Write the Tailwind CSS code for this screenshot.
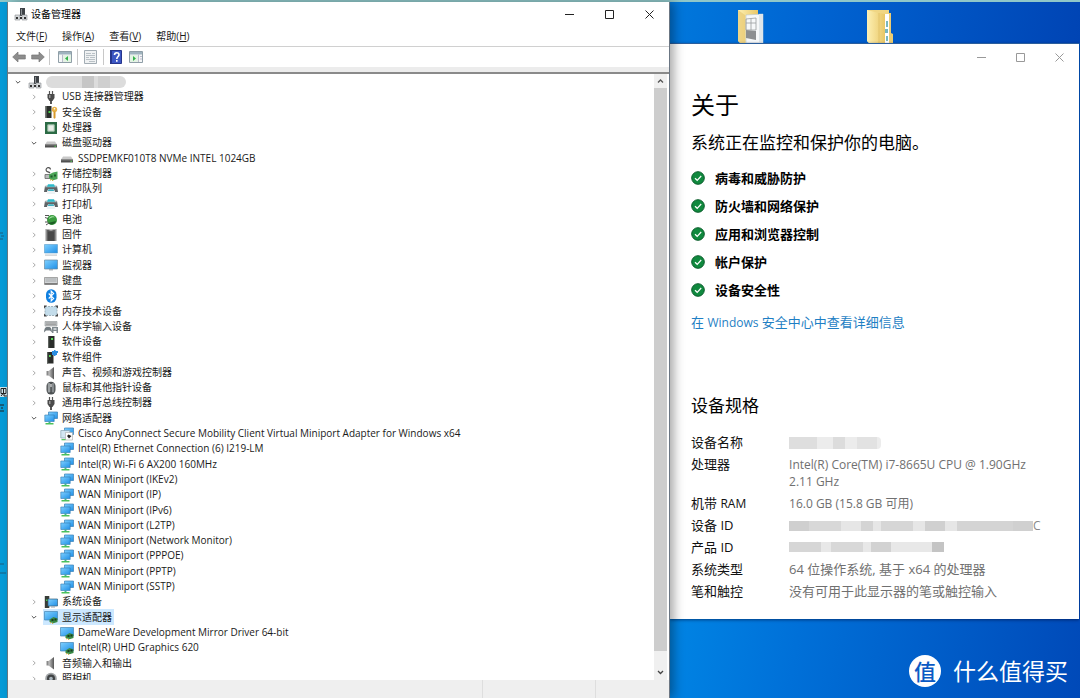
<!DOCTYPE html>
<html lang="zh-CN">
<head>
<meta charset="utf-8">
<meta name="viewport" content="width=device-width, initial-scale=1">
<title>设备管理器</title>
<script src="https://cdn.jsdelivr.net/npm/@tailwindcss/browser@4"></script>
</head>
<body class="h-screen overflow-hidden bg-[#0a5fd0] font-['Open_Sans','Noto_Sans_CJK_SC',sans-serif] text-black">

<svg class="absolute size-0" aria-hidden="true">
  <defs>
    <linearGradient id="scr" x1="0" y1="0" x2="1" y2="1"><stop offset="0" stop-color="#7fd0ff"/><stop offset="1" stop-color="#1f8fe6"/></linearGradient>
    <linearGradient id="met" x1="0" y1="0" x2="1" y2="0"><stop offset="0" stop-color="#c9c9c9"/><stop offset="1" stop-color="#555"/></linearGradient>
    <linearGradient id="fold" x1="0" y1="0" x2="1" y2="0"><stop offset="0" stop-color="#fdf0b4"/><stop offset="1" stop-color="#e9c766"/></linearGradient>
  </defs>
  <symbol id="i-root" viewBox="0 0 14 14"><path fill="#3f4347" d="M6 1h5v8H6z"/><path fill="#8b9094" d="M7 2h1v6H7z"/><path fill="#d5d8da" stroke="#8a8d90" stroke-width=".6" d="M1 8h5v5H1zM8 8h5v5H8z"/><path fill="#333" d="M2 10h2v2H2zM10 10h2v2h-2zM6 10h2v2H6z"/></symbol>
  <symbol id="i-usb" viewBox="0 0 14 14"><path stroke="#555" stroke-width="1.200" d="M5.500 1v3M8.500 1v3"/><path fill="#4b4b4b" d="M3.500 4h7v4l-2 3h-3l-2-3z"/><path fill="#999" d="M5 5h1.500v3H5z"/><path stroke="#444" stroke-width="1.800" d="M7 10v4"/></symbol>
  <symbol id="i-sec" viewBox="0 0 14 14"><path fill="#2b2e2b" d="M1.500 1h6v12h-6z"/><path fill="#5a5f5a" d="M1.500 1h1.500v12H1.500z"/><path fill="#49d04a" d="M4.500 6h2v2h-2z"/><circle cx="10.500" cy="4.500" r="2.700" fill="#e9b34a"/><circle cx="10.500" cy="3.700" r=".8" fill="#fff"/><path fill="#d89a2c" d="M9.500 6.500h2V13l-1 .8-1-.8z"/></symbol>
  <symbol id="i-cpu" viewBox="0 0 14 14"><path fill="#2c6b45" d="M1 1h12v12H1z"/><path fill="#e9eee9" stroke="#9fc0a8" d="M3.800 3.800h6.400v6.400H3.800z"/></symbol>
  <symbol id="i-disk" viewBox="0 0 14 14"><path fill="#c9c9c9" d="M3 5.500h8L13 8.500H1z"/><path fill="#505050" d="M1 8.500h12v3H1z"/><path fill="#7a7a7a" d="M1 8.500h12v1H1z"/><path fill="#53d053" d="M10.500 9.800h1.500v1h-1.500z"/></symbol>
  <symbol id="i-stor" viewBox="0 0 14 14"><path fill="none" stroke="#555" stroke-width="1.200" d="M6.500 2.500a2.200 2.200 0 1 0-4 1.500c.5 1 2.500.8 3.500 2"/><path fill="#b9bcbc" stroke="#666" stroke-width=".8" d="M1 7.500h5v4H1z"/><path fill="#4ca558" d="M5 7.500l4-2 4.500-1V12l-5 1.500L5 11z"/><path fill="#1f5a2b" d="M6.500 8.500h2v2h-2zM10 7.500h2v2h-2z"/><path fill="#d8b44a" d="M6 12h1v1.500H6zM8 12.500h1V14H8z"/></symbol>
  <symbol id="i-prn" viewBox="0 0 14 14"><path fill="#5e6366" d="M1 4h12l1 6h-3l-1-2.500H4L3 10H0z"/><path fill="#b5babd" d="M1.500 3.500h11l.4 1.800H1.100z"/><path fill="#2bbaca" d="M4 2.300h6l1 2.400H3z"/><path fill="#eef3f5" d="M4.200 7.500h5.600L11.500 12h-9z"/><path fill="#3fafc0" d="M4.500 7.200h5l.6 1.800H3.900z"/></symbol>
  <symbol id="i-bat" viewBox="0 0 14 14"><circle cx="8" cy="7" r="5" fill="#3a9b3f"/><path fill="#9fdf9f" d="M5 5c2-2.500 5-2 6-.5-2-.5-4 .2-6 1.500z"/><path fill="#1d5f25" d="M4 10l8-2c-.5 3-5 5-8 2z"/><path stroke="#555" fill="none" d="M1 2.500h4M1 4.500l3 1M2 12l3-2M1 9h3"/></symbol>
  <symbol id="i-fw" viewBox="0 0 14 14"><path fill="#606060" d="M2.500 1.500h9v11.500h-9z"/><path fill="#484848" d="M4 3.500h6V13H4z"/><path stroke="#444" stroke-dasharray="1 1" stroke-width="1.200" d="M2 1.500V13M12 1.500V13"/><path fill="#ccc" d="M5.500 1h3v1.500h-3z"/></symbol>
  <symbol id="i-pc" viewBox="0 0 14 14"><path fill="url(#scr)" stroke="#5a9ac8" stroke-width=".6" d="M.5 1.500h13v8.500H.5z"/><path fill="#c4c9cc" d="M1 11.500h12v1.200H1z"/></symbol>
  <symbol id="i-mon" viewBox="0 0 14 14"><path fill="url(#scr)" stroke="#6c8ba1" stroke-width=".7" d="M.5 2h13v9H.5z"/><path fill="#9aa3a8" d="M5 11.200h4v1.200H5z"/></symbol>
  <symbol id="i-kb" viewBox="0 0 14 14"><path fill="#d2d5d7" stroke="#888" stroke-width=".7" d="M.5 3.500h13v6H.5z"/><path stroke="#a5a9ab" d="M1.500 5h11M1.500 7h11"/><path fill="#555" d="M.3 9.500h13.400v1.200H.3z"/></symbol>
  <symbol id="i-bt" viewBox="0 0 14 14"><rect x="2" y=".3" width="10.500" height="13.400" rx="5.200" fill="#0f7fe0"/><path fill="none" stroke="#fff" stroke-width="1.100" d="M4.700 4.500l5 5L7.200 12V2l2.500 2.500-5 5"/></symbol>
  <symbol id="i-mem" viewBox="0 0 14 14"><path fill="#c3dcea" stroke="#8fa3af" stroke-width=".8" stroke-dasharray="2 1" d="M1 2.500h12v9H1z"/><path fill="#444" d="M0 1.500h3l-3 3zM14 1.500h-3l3 3zM14 12.500h-3l3-3zM0 12.500h3l-3-3z"/></symbol>
  <symbol id="i-hid" viewBox="0 0 14 14"><path fill="#c3c7c9" stroke="#8f9395" stroke-width=".6" d="M1 1.500h12V6H1z"/><path stroke="#999" d="M2 3h10M2 4.700h10"/><path fill="#727b80" d="M0 12.500c0-3 1-5.500 2.500-5.500h3C7 7 8 9.500 8 12.500l-2-2H2z"/><path fill="#808a8f" d="M8 7h6v6h-1.500v-2h-3v2H8z"/><path fill="#c9ced1" d="M9.500 8h3v2h-3z"/></symbol>
  <symbol id="i-dev" viewBox="0 0 14 14"><path fill="#2a2d2a" d="M4 1h6.500v12H4z"/><path fill="#606460" d="M4 1h1.200v12H4z"/><path fill="#58d858" d="M7 3h2v2H7z"/></symbol>
  <symbol id="i-comp" viewBox="0 0 14 14"><path fill="#2a2d2a" d="M3 2h6.500v11.500H3z"/><path fill="#606460" d="M3 2h1.200v11.500H3z"/><path fill="#58d858" d="M5 5h1.800v2H5z"/><path fill="#2a8de0" d="M8 1h2V0h1.500v1H14v2h-1v2h-1.500v1H10V5H8z"/></symbol>
  <symbol id="i-snd" viewBox="0 0 14 14"><path fill="#8a8a8a" d="M2.500 5h3v4.500h-3z"/><path fill="url(#met)" d="M4.500 5L10 1v12.500L4.500 9.500z"/></symbol>
  <symbol id="i-mouse" viewBox="0 0 14 14"><rect x="2.500" y=".8" width="9" height="12.600" rx="4.300" fill="#4c5052"/><rect x="3.800" y="2" width="2.500" height="9.500" rx="1.200" fill="#9ba0a2"/><rect x="7.800" y="2" width="2.400" height="9.500" rx="1.200" fill="#868b8e"/><path fill="#ddd" d="M6.400 3h1.200v3H6.400z"/></symbol>
  <symbol id="i-net" viewBox="0 0 14 14"><path fill="url(#scr)" stroke="#3a7fb5" stroke-width=".7" d="M4.500 1h9v6.500h-9z"/><path fill="url(#scr)" stroke="#2f78b0" stroke-width=".6" d="M.8 4h9.400v6.500H.8z"/><path fill="#3fae9a" d="M4.500 10.500h2V12h-2z"/><path fill="#4cc05a" d="M1.500 12h8v1.500h-8z"/></symbol>
  <symbol id="i-vnet" viewBox="0 0 14 14"><path fill="url(#scr)" stroke="#3a7fb5" stroke-width=".7" d="M4.500 1h9v6.500h-9z"/><path fill="#d3e6f2" stroke="#86a4b5" stroke-width=".7" d="M.8 3.500h9v7.500h-9z"/><path fill="#fff" stroke="#aaa" stroke-width=".6" d="M5.500 5.500h7v7.500h-7z"/><path fill="#222" d="M8.500 7.500L11.500 9l-2.500 2.500L7 9z"/><path fill="#58c563" d="M1.500 12h4v1.300h-4z"/></symbol>
  <symbol id="i-sys" viewBox="0 0 14 14"><path fill="#383c38" d="M.8 1h4.500v12H.8z"/><path fill="#49d04a" d="M2 4.500h1.500V6H2z"/><path fill="url(#scr)" stroke="#37617d" stroke-width=".7" d="M4 4h9.500v7H4z"/><path fill="#9aa3a8" d="M7 11.500h4v1H7z"/></symbol>
  <symbol id="i-gpu" viewBox="0 0 14 14"><path fill="url(#scr)" stroke="#4385b5" stroke-width=".7" d="M.5 1.500h13V10H.5z"/><path fill="#3a8a46" d="M5.500 9.500l4-2.500 4 1.500V12l-4 1.200-4-1.200z"/><path fill="#193d20" d="M7.500 9h2v2h-2zM10.500 8.500h2v2h-2z"/><path fill="#d8b44a" d="M6 12h1v1.300H6zM8 12.700h1V14H8z"/></symbol>
  <symbol id="i-cam" viewBox="0 0 14 14"><circle cx="7" cy="6.500" r="5.800" fill="#a0a4a6"/><circle cx="7" cy="6.500" r="4" fill="#404345"/><circle cx="7" cy="6.500" r="1.800" fill="#a8b4bc"/><path fill="#777" d="M4 12h6v1.500H4z"/></symbol>
  <symbol id="c-open" viewBox="0 0 8 8"><path fill="none" stroke="#555" d="M1.800 3L4 5.200 6.200 3"/></symbol>
  <symbol id="c-shut" viewBox="0 0 8 8"><path fill="none" stroke="#a8a8a8" d="M3 1.800L5.200 4 3 6.200"/></symbol>
</svg>

<div class="flex h-full border-t-2 border-[#8fc7c9]">
  <!-- desktop visible left of the window, with the edges of its icon captions -->
  <aside class="flex w-2 shrink-0 flex-col border-r border-[#6f7f8a] bg-[#069bd8]" aria-hidden="true">
    <svg class="mt-[228px] h-3 w-[7px]" viewBox="0 0 7 12"><path fill="none" stroke="#1b5f80" d="M0 3h3M1 6h3M0 9h3"/></svg>
    <svg class="mt-[140px] h-[34px] w-[7px]" viewBox="0 0 7 34"><path fill="#cfe6ee" d="M0 5h7v10H0z"/><path fill="none" stroke="#222" d="M1 6.500h5v5H1zM3.500 6v5L1 14M4 11v3h3M0 23h4M1 26h2M0 29h4"/></svg>
    <svg class="mt-[144px] h-4 w-[7px]" viewBox="0 0 7 16"><path stroke="#1b5f80" d="M0 4h4M0 13h6"/></svg>
  </aside>

  <!-- device manager -->
  <main class="relative z-10 flex w-[61.3%] shrink-0 flex-col border-r border-[#6b7683] bg-white shadow-[4px_0_10px_rgba(0,0,0,0.35)]">
    <header class="flex h-6 shrink-0 items-center pl-[6px]">
      <svg class="size-[14px]" aria-hidden="true"><use href="#i-root"/></svg>
      <h1 class="ml-[3px] flex-1 text-[10px]">设备管理器</h1>
      <div class="flex text-[#222]">
        <button class="flex h-6 w-10 items-center justify-center" aria-label="最小化"><svg class="size-[9px]" viewBox="0 0 9 9"><path stroke="currentColor" d="M0 4.500h9"/></svg></button>
        <button class="flex h-6 w-10 items-center justify-center" aria-label="最大化"><svg class="size-[9px]" viewBox="0 0 9 9"><path fill="none" stroke="currentColor" d="M.5.5h8v8h-8z"/></svg></button>
        <button class="flex h-6 w-10 items-center justify-center" aria-label="关闭"><svg class="size-[9px]" viewBox="0 0 9 9"><path stroke="currentColor" d="M.5.5l8 8M8.500.5l-8 8"/></svg></button>
      </div>
    </header>
    <nav class="flex h-[21px] shrink-0 items-center gap-[15px] border-b border-[#d0d0d0] pl-2 text-[10px] text-[#1a1a1a]">
      <button>文件(<u>F</u>)</button><button>操作(<u>A</u>)</button><button>查看(<u>V</u>)</button><button>帮助(<u>H</u>)</button>
    </nav>
    <div class="flex h-5 shrink-0 items-center pl-1" role="toolbar" aria-label="工具栏">
      <button aria-label="后退"><svg class="h-3 w-[14px]" viewBox="0 0 14 12"><path fill="#8d8d8d" stroke="#777" stroke-width=".7" d="M.7 6L6 1v3h7.300v4H6v3z"/></svg></button>
      <button class="ml-[5px]" aria-label="前进"><svg class="h-3 w-[14px]" viewBox="0 0 14 12"><path fill="#8d8d8d" stroke="#777" stroke-width=".7" d="M13.300 6L8 1v3H.7v4H8v3z"/></svg></button>
      <span class="ml-1 h-4 w-px bg-[#c8c8c8]"></span>
      <button class="ml-2" aria-label="显示控制台树"><svg class="h-3 w-[14px]" viewBox="0 0 14 12"><path fill="#f4f6f7" stroke="#8f9ea7" d="M.5.5h13v11H.5z"/><path fill="#9fb3be" d="M1 1h12v2.500H1z"/><path stroke="#bbc" d="M4.500 3.500V11"/><path fill="#e4f3e4" d="M5 4h8v7H5z"/><path fill="#34b24b" d="M10 5v5L7 7.500z"/></svg></button>
      <span class="ml-[5px] h-4 w-px bg-[#c8c8c8]"></span>
      <button class="ml-[6px]" aria-label="属性"><svg class="h-[14px] w-[13px]" viewBox="0 0 13 14"><path fill="#f0f2f3" stroke="#a3adb4" d="M.5.5h12v13H.5z"/><path stroke="#b9c1c6" d="M2 3.500h5M8 3.500h3M2 5.500h9M2 7.500h3M6 7.500h5M2 9.500h9M5 11.500h6"/></svg></button>
      <span class="ml-[6px] h-4 w-px bg-[#c8c8c8]"></span>
      <button class="ml-[6px]" aria-label="帮助"><svg class="h-[14px] w-3" viewBox="0 0 12 14"><path fill="#3c57c4" stroke="#26358c" d="M.5.5h11v13H.5z"/><path fill="#26358c" d="M0 0h2v14H0z"/><path fill="none" stroke="#fff" stroke-width="1.600" d="M4.500 5c0-3 4.500-3 4.500-.3C9 6.500 6.800 6.500 6.800 9M6.800 10v1.800"/></svg></button>
      <button class="ml-[7px]" aria-label="扫描"><svg class="h-3 w-[14px]" viewBox="0 0 14 12"><path fill="#f4f6f7" stroke="#8f9ea7" d="M.5.5h13v11H.5z"/><path fill="#9fb3be" d="M1 1h12v2.500H1z"/><path stroke="#bbc" d="M9.500 3.500V11M11 5.500h2M11 8h2"/><path fill="#e4f3e4" d="M1 4h8v7H1z"/><path fill="#34b24b" d="M4 5v5l3-2.500z"/></svg></button>
    </div>
    <div class="h-[5px] shrink-0 bg-[#ececec]"></div>
    <div class="flex min-h-0 flex-1 border-t-2 border-[#8a8a8a] pr-[2px]">
      <ul id="tree" role="tree" aria-label="设备" class="grid min-w-0 flex-1 auto-rows-[15px_15px_16px_15px_15px_16px_15px_15px_16px_15px] content-start overflow-hidden text-[10px] text-[#1a1a1a]"></ul>
      <div class="flex w-[13px] flex-col bg-[#f0f0f0]" aria-hidden="true">
        <svg class="h-[14px] w-[13px]" viewBox="0 0 13 14"><path fill="none" stroke="#555" stroke-width="1.300" d="M4 8.500L6.500 6 9 8.500"/></svg>
        <div class="flex-1 bg-[#cdcdcd]"></div>
        <svg class="mt-[14px] h-[15px] w-[13px]" viewBox="0 0 13 15"><path fill="none" stroke="#444" stroke-width="1.300" d="M4 6l2.500 2.500L9 6"/></svg>
      </div>
    </div>
    <footer class="flex h-[18px] shrink-0 bg-[#efefef]">
      <div class="flex-1 border-r border-[#dedede]"></div><div class="w-[113px] border-r border-[#dedede]"></div><div class="w-[73px]"></div>
    </footer>
  </main>

  <!-- right part of the desktop -->
  <div class="flex min-w-0 flex-1 flex-col bg-[linear-gradient(100deg,#0095ee_0%,#0070d8_45%,#0049b8_100%)]">
    <div class="flex h-[41px] shrink-0 items-end bg-[linear-gradient(100deg,#0078dc_0%,#0064d2_35%,#0044b4_100%)] pl-[67px]">
      <svg class="h-[34px] w-7" viewBox="0 0 28 34" role="img" aria-label="文件夹"><path fill="url(#fold)" d="M1 1h20v33H3l-2-2z"/><path fill="#f6f8f9" stroke="#b8c4cc" stroke-width=".6" d="M9 6l17-1v29H9z"/><path fill="#dfe6ea" d="M22 5h4v29h-4z"/><path fill="none" stroke="#9a9da0" stroke-width=".8" d="M9 10l10-1v12H9zM14 9.500V21M9 14h10"/><path fill="#8d8f91" d="M9 21l10 1v9l-10-2z"/><path fill="#e6c56c" d="M1 1l7 5v28H3l-2-2z" opacity=".6"/></svg>
      <svg class="ml-[101px] h-[34px] w-7" viewBox="0 0 28 34" role="img" aria-label="文件夹"><path fill="#f0d684" d="M1 1h22v33H3l-2-2z"/><path fill="#fff" d="M17 5h8v29h-8z"/><path fill="#79b7bd" d="M20 12h2v6h-2zM19 20h3v4h-3zM20 27h2v5h-2z"/><path fill="url(#fold)" d="M1 1l12 3 6 1v29H3l-2-2z"/><path fill="#eccc73" d="M23 4h2v20l2 1v9h-4z"/><path stroke="#d9b758" d="M13 4v30" opacity=".5"/></svg>
    </div>
    <section class="mr-px shrink-0 border-t border-[#2b5e9c] bg-white pb-[14px] pl-[21px] shadow-[0_1px_3px_rgba(0,0,40,0.5)]">
      <div class="flex h-[27px] items-center justify-end text-[#999]">
        <button class="flex h-full w-[39px] items-center justify-center" aria-label="最小化"><svg class="size-[9px]" viewBox="0 0 9 9"><path stroke="currentColor" d="M0 4.500h9"/></svg></button>
        <button class="flex h-full w-[39px] items-center justify-center" aria-label="最大化"><svg class="size-[9px]" viewBox="0 0 9 9"><path fill="none" stroke="currentColor" d="M.5.5h8v8h-8z"/></svg></button>
        <button class="flex h-full w-[39px] items-center justify-center" aria-label="关闭"><svg class="size-[9px]" viewBox="0 0 9 9"><path stroke="currentColor" d="M.5.5l8 8M8.500.5l-8 8"/></svg></button>
      </div>
      <h2 class="mt-[18px] text-[24px] leading-8">关于</h2>
      <p class="mt-[10px] text-[17px] leading-6">系统正在监控和保护你的电脑。</p>
      <ul class="mt-[9px] text-[13px] leading-7 font-bold" id="checks"></ul>
      <a href="#" class="mt-2 block text-[13px] leading-5 text-[#1f7fc4]">在 <span class="text-[12px]">Windows</span> 安全中心中查看详细信息</a>
      <h3 class="mt-[61px] text-[17px] leading-6">设备规格</h3>
      <table class="mt-4 w-full border-collapse text-left text-[13px] leading-[17px]">
        <tbody class="text-[#707070] [&_td]:pb-[5px] [&_td]:align-top [&_th]:w-[98px] [&_th]:pb-[5px] [&_th]:align-top [&_th]:font-normal [&_th]:text-[#111]">
          <tr><th scope="row">设备名称</th><td><span class="mt-[3px] flex h-3 w-[92px] rounded-sm bg-[#ececec]" aria-label="已隐藏"><i class="w-7 bg-[#dedede]"></i><i class="ml-4 w-3 bg-[#dcdcdc]"></i><i class="ml-3 w-5 bg-[#e2e2e2]"></i></span></td></tr>
          <tr><th scope="row">处理器</th><td class="text-[12px]">Intel(R) Core(TM) i7-8665U CPU @ 1.90GHz<br>2.11 GHz</td></tr>
          <tr><th scope="row">机带 <span class="text-[12px]">RAM</span></th><td class="text-[12px]">16.0 GB (15.8 GB 可用)</td></tr>
          <tr><th scope="row">设备 ID</th><td><span class="mt-1 flex h-[10px] w-[252px] bg-[#e6e6e6]" aria-label="已隐藏"><i class="w-5 bg-[#cfcfcf]"></i><i class="w-8 bg-[#d8d8d8]"></i><i class="ml-5 w-3 bg-[#d4d4d4]"></i><i class="ml-2 w-8 bg-[#d6d6d6]"></i><i class="ml-3 w-5 bg-[#d0d0d0]"></i><i class="ml-3 w-14 bg-[#d4d4d4]"></i><i class="flex-1 bg-[#d0d0d0]"></i><i class="w-2 bg-white text-[12px] leading-[10px] text-[#888] not-italic">C</i></span></td></tr>
          <tr><th scope="row">产品 ID</th><td><span class="mt-[3px] flex h-[10px] w-[155px] bg-[#e8e8e8]" aria-label="已隐藏"><i class="w-8 bg-[#d6d6d6]"></i><i class="ml-[10px] w-8 bg-[#d8d8d8]"></i><i class="ml-2 w-5 bg-[#d2d2d2]"></i><i class="ml-auto w-3 bg-[#c4c4c4]"></i></span></td></tr>
          <tr><th scope="row">系统类型</th><td>64 位操作系统, 基于 x64 的处理器</td></tr>
          <tr><th scope="row">笔和触控</th><td>没有可用于此显示器的笔或触控输入</td></tr>
        </tbody>
      </table>
    </section>
    <div class="flex flex-1 items-end justify-end gap-3 pr-3 pb-[11px] text-white">
      <span class="flex size-8 items-center justify-center rounded-full bg-white text-[22px] leading-none font-medium text-[#0a5ac4]">值</span>
      <span class="text-[23px] leading-8">什么值得买</span>
    </div>
  </div>
</div>

<script>
  // [level, chevron, icon, label]
  const rows = [
    [0,'open','root',''],
    [1,'shut','usb','USB 连接器管理器'],[1,'shut','sec','安全设备'],[1,'shut','cpu','处理器'],[1,'open','disk','磁盘驱动器'],
    [2,'','disk','SSDPEMKF010T8 NVMe INTEL 1024GB'],
    [1,'shut','stor','存储控制器'],[1,'shut','prn','打印队列'],[1,'shut','prn','打印机'],[1,'shut','bat','电池'],[1,'shut','fw','固件'],
    [1,'shut','pc','计算机'],[1,'shut','mon','监视器'],[1,'shut','kb','键盘'],[1,'shut','bt','蓝牙'],[1,'shut','mem','内存技术设备'],
    [1,'shut','hid','人体学输入设备'],[1,'shut','dev','软件设备'],[1,'shut','comp','软件组件'],[1,'shut','snd','声音、视频和游戏控制器'],
    [1,'shut','mouse','鼠标和其他指针设备'],[1,'shut','usb','通用串行总线控制器'],[1,'open','net','网络适配器'],
    [2,'','vnet','Cisco AnyConnect Secure Mobility Client Virtual Miniport Adapter for Windows x64'],
    [2,'','net','Intel(R) Ethernet Connection (6) I219-LM'],[2,'','net','Intel(R) Wi-Fi 6 AX200 160MHz'],
    [2,'','net','WAN Miniport (IKEv2)'],[2,'','net','WAN Miniport (IP)'],[2,'','net','WAN Miniport (IPv6)'],[2,'','net','WAN Miniport (L2TP)'],
    [2,'','net','WAN Miniport (Network Monitor)'],[2,'','net','WAN Miniport (PPPOE)'],[2,'','net','WAN Miniport (PPTP)'],[2,'','net','WAN Miniport (SSTP)'],
    [1,'shut','sys','系统设备'],[1,'open','gpu','显示适配器'],
    [2,'','gpu','DameWare Development Mirror Driver 64-bit'],[2,'','gpu','Intel(R) UHD Graphics 620'],
    [1,'shut','snd','音频输入和输出'],[1,'shut','cam','照相机']
  ];
  const pad = ['pl-[6px]', 'pl-[22px]', 'pl-[38px]'];
  const masked = '<span class="flex h-3 w-20 overflow-hidden rounded-full bg-[#dcdcdc]" aria-label="已隐藏"><i class="ml-9 w-3 bg-[#c6c6c6]"></i><i class="ml-1 w-3 bg-[#cfcfcf]"></i></span>';
  document.getElementById('tree').innerHTML = rows.map(([lv, ch, ic, label]) =>
    `<li role="treeitem" aria-level="${lv + 1}" class="flex items-center whitespace-nowrap ${pad[lv]}">` +
    (ch ? `<button class="size-2" aria-label="展开或折叠"><svg class="size-2"><use href="#c-${ch}"/></svg></button>` : '<span class="size-2"></span>') +
    `<span class="ml-[5px] flex h-full items-center gap-1 pl-px ${label === '显示适配器' ? 'bg-[#cce8ff] pr-[2px]' : ''}"><svg class="size-[14px]" aria-hidden="true"><use href="#i-${ic}"/></svg>${label || masked}</span></li>`).join('');
  document.getElementById('checks').innerHTML = ['病毒和威胁防护','防火墙和网络保护','应用和浏览器控制','帐户保护','设备安全性'].map(t =>
    `<li class="flex items-center gap-[10px]"><svg class="size-[14px]" viewBox="0 0 14 14" aria-hidden="true"><circle cx="7" cy="7" r="6.300" fill="#10893e" stroke="#0a5c2b"/><path fill="none" stroke="#fff" stroke-width="1.200" d="M4 7.200l2.200 2.100L10.200 5"/></svg>${t}</li>`).join('');
</script>
</body>
</html>
